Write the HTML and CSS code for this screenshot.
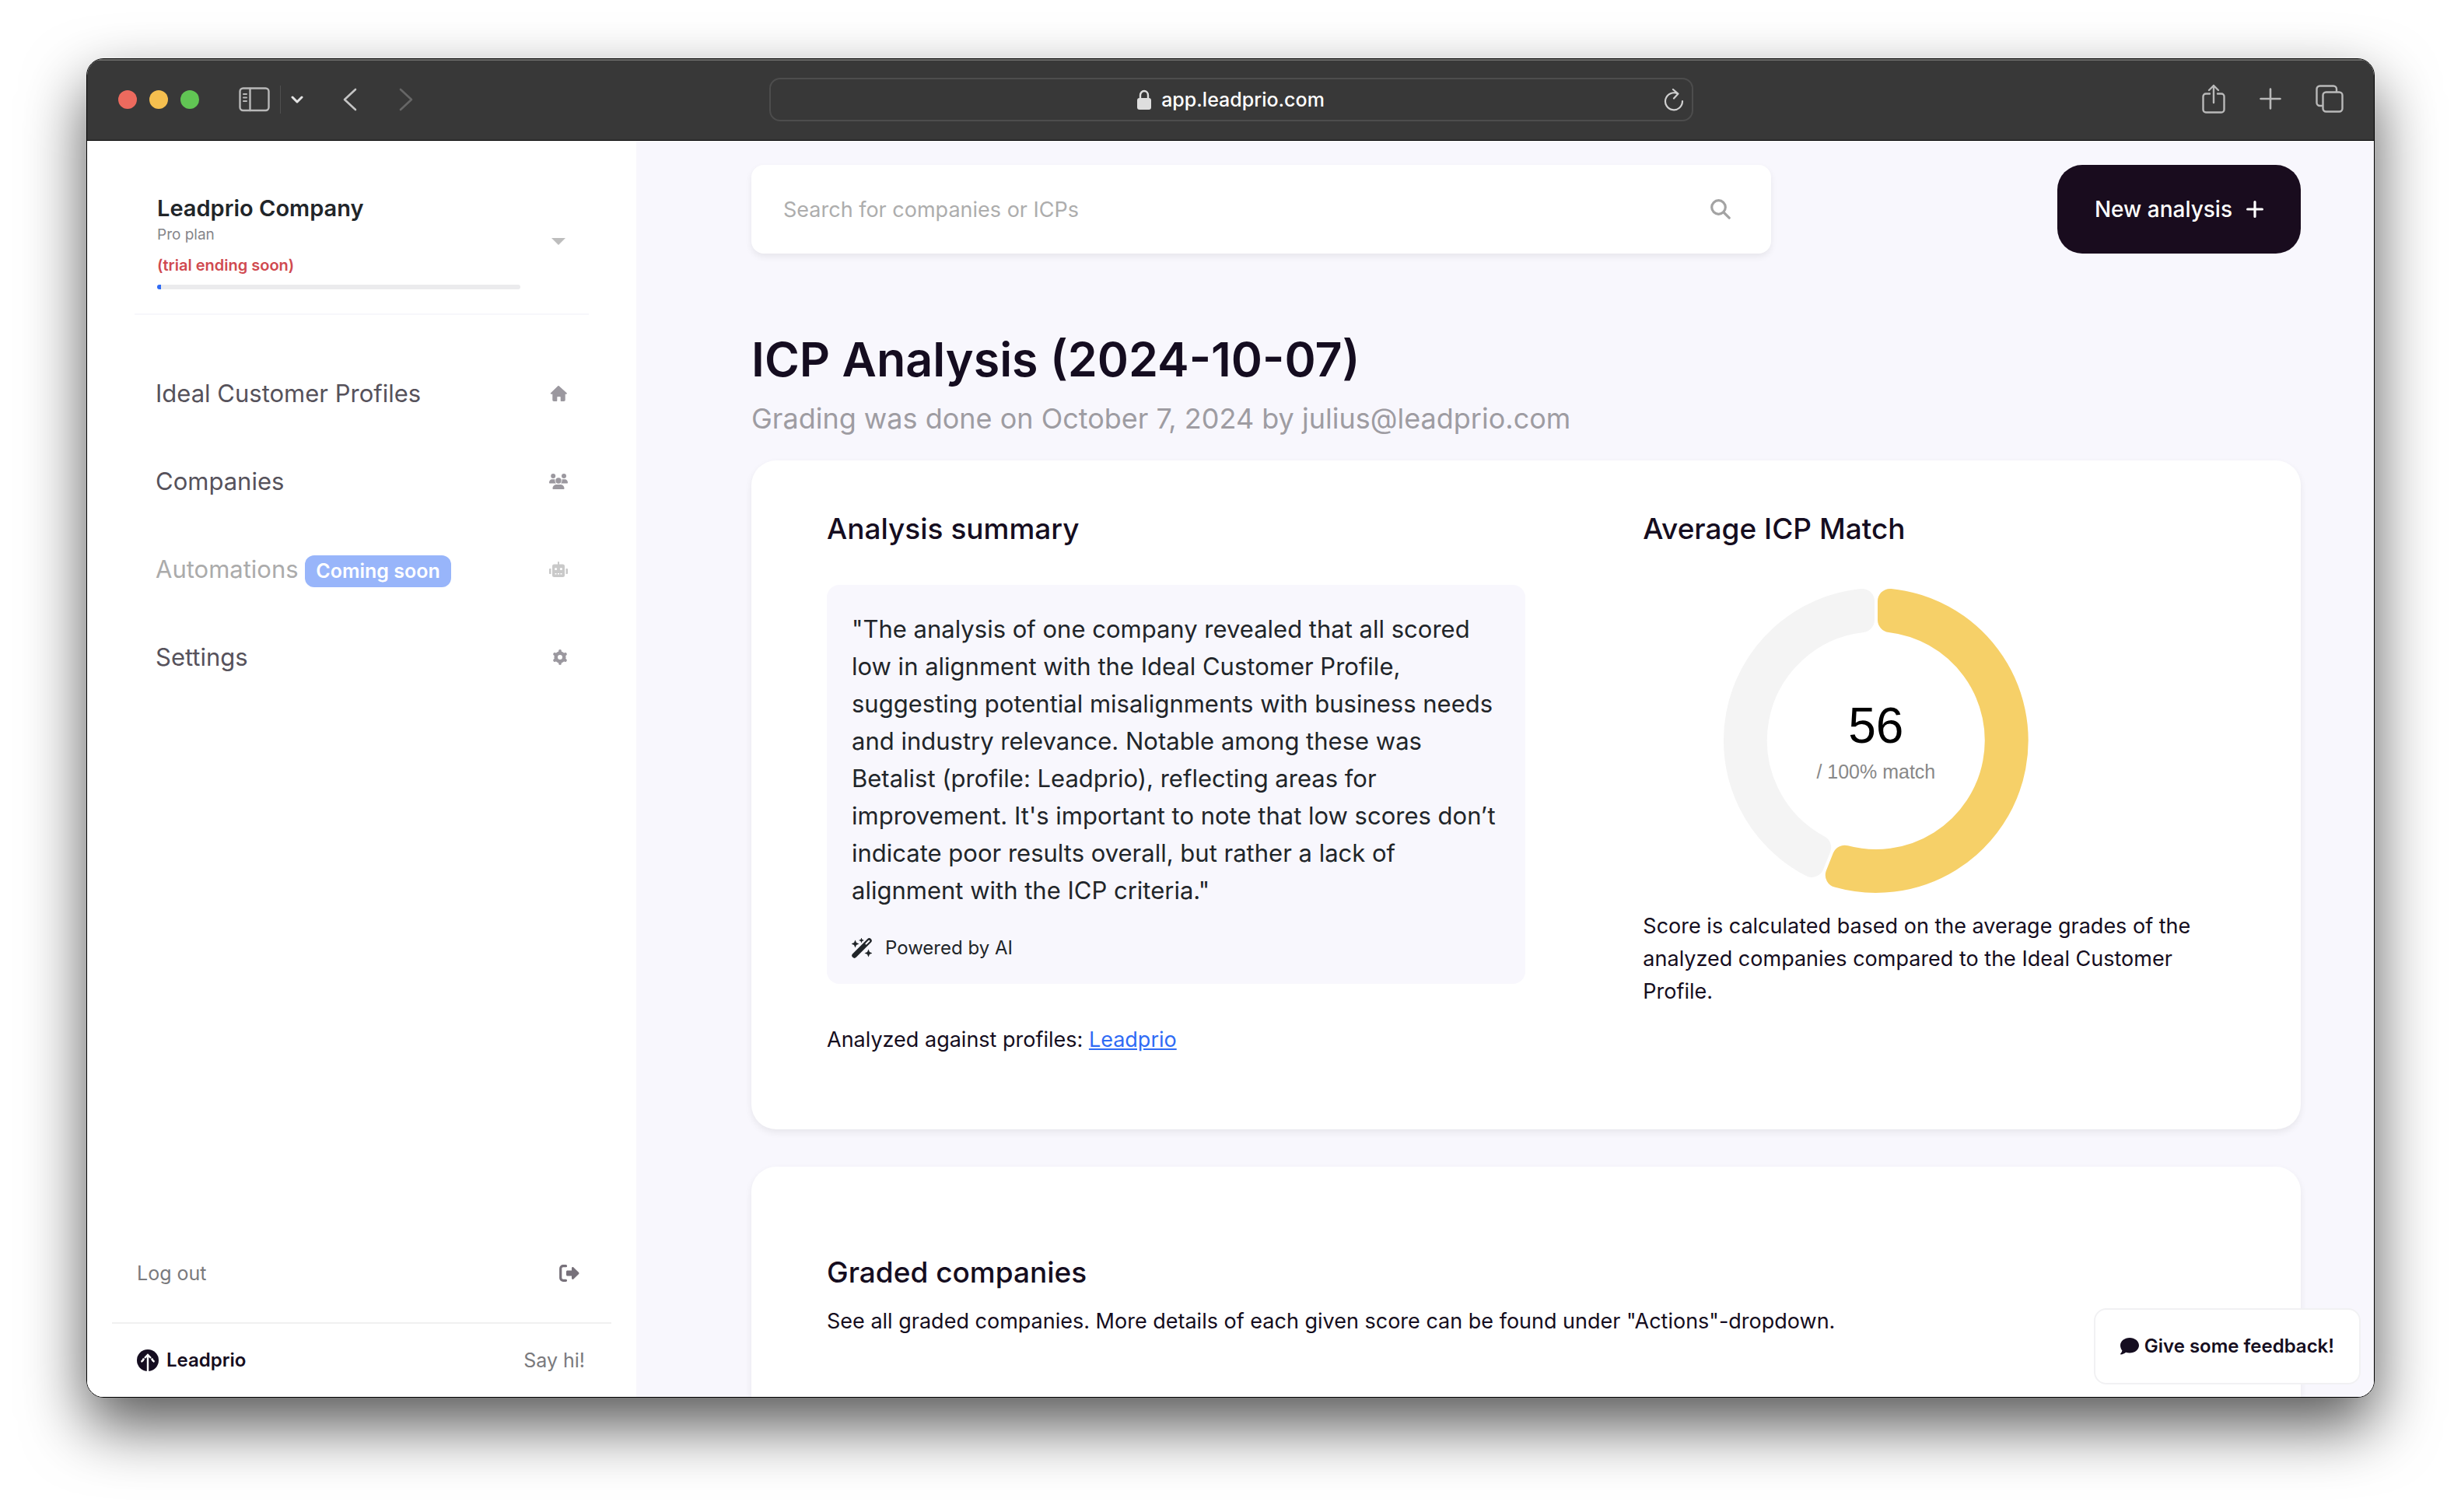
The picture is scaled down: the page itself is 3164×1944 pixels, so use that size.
FILE: index.html
```html
<!DOCTYPE html>
<html lang="en">
<head>
    <meta charset="UTF-8">
    <meta name="viewport" content="width=device-width, initial-scale=1.0">
    <title>Leadprio</title>
    <link rel="stylesheet" href="styles.css">
</head>
<body>
    <div class="window">
        <header class="toolbar">
            <div class="toolbar-side">
                <div class="lights">
                    <span class="light red"></span>
                    <span class="light yellow"></span>
                    <span class="light green"></span>
                </div>
                <div class="sidebar-toggle">
                    <button type="button" aria-label="Toggle sidebar">
                        <svg width="40" height="32" viewBox="0 0 40 32" fill="none" stroke="#b9b9b9" stroke-width="2.4" stroke-linecap="round">
                            <rect x="1.5" y="1.5" width="37" height="28.5" rx="4"/>
                            <path d="M14.500 2v28"/>
                            <path d="M6 9h4M6 13.500h4M6 18h4" stroke-width="2"/>
                        </svg>
                    </button>
                    <span class="toolbar-divider"></span>
                    <button type="button" aria-label="Tab groups">
                        <svg width="16" height="12" viewBox="0 0 16 12" fill="none" stroke="#e4e4e4" stroke-width="3" stroke-linecap="round" stroke-linejoin="round">
                            <path d="M2 3l6 6 6-6"/>
                        </svg>
                    </button>
                </div>
                <div class="history">
                    <button type="button" aria-label="Back">
                        <svg width="18" height="30" viewBox="0 0 18 30" fill="none" stroke="#c4c4c4" stroke-width="2.6" stroke-linecap="round" stroke-linejoin="round">
                            <path d="M16 2L2 15l14 13"/>
                        </svg>
                    </button>
                    <button type="button" aria-label="Forward">
                        <svg width="18" height="30" viewBox="0 0 18 30" fill="none" stroke="#666" stroke-width="2.6" stroke-linecap="round" stroke-linejoin="round">
                            <path d="M2 2l14 13L2 28"/>
                        </svg>
                    </button>
                </div>
            </div>
            <div class="address">
                <span class="address-text">
                    <svg width="18" height="26" viewBox="0 0 18 26">
                        <rect y="11" width="18" height="15" rx="3" fill="#dedede"/>
                        <path d="M4 12V7.500a5 5.500 0 0 1 10 0V12" fill="none" stroke="#dedede" stroke-width="2.4"/>
                    </svg>
                    app.leadprio.com
                </span>
                <button type="button" class="reload" aria-label="Reload">
                    <svg width="26" height="30" viewBox="0 0 26 30" fill="none" stroke="#cfcfcf" stroke-width="2.2" stroke-linecap="round" stroke-linejoin="round">
                        <path d="M18 7.500A11 11 0 1 0 24 17M12 2l6.500 5.500-5.500 6"/>
                    </svg>
                </button>
            </div>
            <div class="toolbar-side toolbar-actions">
                <button type="button" aria-label="Share">
                    <svg width="30" height="38" viewBox="0 0 30 38" fill="none" stroke="#b9b9b9" stroke-width="2.4" stroke-linecap="round" stroke-linejoin="round">
                        <path d="M10 12.500H5a3.500 3.500 0 0 0-3.500 3.500v17A3.500 3.500 0 0 0 5 36.500h20a3.500 3.500 0 0 0 3.500-3.500V16a3.500 3.500 0 0 0-3.500-3.500h-5M15 24V2M9 8l6-6 6 6"/>
                    </svg>
                </button>
                <button type="button" aria-label="New tab">
                    <svg width="28" height="28" viewBox="0 0 28 28" fill="none" stroke="#b9b9b9" stroke-width="2.6" stroke-linecap="round">
                        <path d="M14 1.500v25M1.500 14h25"/>
                    </svg>
                </button>
                <button type="button" aria-label="Tab overview">
                    <svg width="36" height="36" viewBox="0 0 36 36" fill="none" stroke="#b9b9b9" stroke-width="2.4" stroke-linejoin="round">
                        <rect x="9.500" y="9.500" width="25" height="25" rx="4"/>
                        <path d="M9 27H5.500a4 4 0 0 1-4-4V5.500a4 4 0 0 1 4-4H23a4 4 0 0 1 4 4V9"/>
                    </svg>
                </button>
            </div>
        </header>

        <div class="app">
            <aside class="sidebar">
                <div class="org">
                    <div class="org-info">
                        <strong class="org-name">Leadprio Company</strong>
                        <span class="org-plan">Pro plan</span>
                        <span class="org-trial">(trial ending soon)</span>
                        <div class="usage"><div class="usage-bar" style="width: 1%"></div></div>
                    </div>
                    <button type="button" aria-label="Switch company">
                        <svg width="18" height="9" viewBox="0 0 18 9" fill="#bdbdbd"><path d="M0 0h18L9 9z"/></svg>
                    </button>
                </div>

                <nav class="nav">
                    <a href="#">
                        Ideal Customer Profiles
                        <svg width="24" height="20" viewBox="0 0 24 20" fill="#9b989f">
                            <path d="M12.700.3l9.900 8.900c.6.6.3 1.500-.6 1.500h-1.300v7.600c0 .9-.7 1.700-1.700 1.700h-3.300c-.6 0-1-.4-1-1v-4c0-.6-.4-1-1-1h-2.400c-.6 0-1 .4-1 1v4c0 .6-.4 1-1 1H6c-1 0-1.700-.8-1.700-1.700v-7.600H2.600c-.8 0-1.200-.9-.6-1.500L11.300.3c.4-.4 1-.4 1.400 0z"/>
                        </svg>
                    </a>
                    <a href="#">
                        Companies
                        <svg width="24" height="20" viewBox="0 0 24 20" fill="#9b989f">
                            <circle cx="5.200" cy="3" r="3"/>
                            <circle cx="19" cy="3" r="3"/>
                            <circle cx="12" cy="9" r="3.700"/>
                            <path d="M0 11.500c0-2.500 1.700-4.200 3.800-4.200h2.500c.4 0 .8.1 1.200.2-.4 2 .3 3.700 1.500 4.900H.8c-.5 0-.8-.4-.8-.9zM24 11.500c0-2.500-1.700-4.200-3.800-4.200h-2.500c-.4 0-.8.1-1.200.2.4 2-.3 3.700-1.500 4.900h8.200c.5 0 .8-.4.8-.9zM4.500 19c0-2.800 2.100-5 4.800-5h5.400c2.700 0 4.800 2.200 4.800 5 0 .6-.4 1-1 1h-13c-.6 0-1-.4-1-1z"/>
                        </svg>
                    </a>
                    <a href="#" class="disabled">
                        <span>Automations <span class="badge">Coming soon</span></span>
                        <svg width="24" height="20" viewBox="0 0 24 20" fill="#c9c9c9" fill-rule="evenodd">
                            <path d="M12 0c.6 0 1 .4 1 1v2.500h4.500A2.500 2.500 0 0 1 20 6v11.500a2.500 2.500 0 0 1-2.500 2.500h-11A2.500 2.500 0 0 1 4 17.500V6a2.500 2.500 0 0 1 2.500-2.500H11V1c0-.6.400-1 1-1zM7 9.500a1.600 1.600 0 1 0 3.200 0 1.600 1.600 0 1 0-3.200 0zM13.800 9.500a1.600 1.600 0 1 0 3.200 0 1.600 1.600 0 1 0-3.200 0zM7.500 15v1.500h2V15zM11 15v1.500h2V15zM14.500 15v1.500h2V15z"/>
                            <path d="M0 10c0-.6.500-1 1.200-1h1.300v7H1.200C.5 16 0 15.600 0 15zM24 10c0-.6-.5-1-1.200-1h-1.300v7h1.300c.7 0 1.200-.4 1.200-1z"/>
                        </svg>
                    </a>
                    <a href="#">
                        Settings
                        <svg width="20" height="20" viewBox="0 0 20 20" fill="none" stroke="#9b989f" stroke-linecap="round">
                            <circle cx="10" cy="10" r="5.300" stroke-width="4.600"/>
                            <path d="M10 2v2M10 16v2M3.100 6l1.700 1M15.200 13l1.700 1M3.100 14l1.700-1M15.200 7l1.700-1" stroke-width="3.800"/>
                        </svg>
                    </a>
                </nav>

                <a href="#" class="logout">
                    Log out
                    <svg width="26" height="22" viewBox="0 0 26 22" fill="#77717a">
                        <path d="M8.500 1.700H5A3.300 3.300 0 0 0 1.700 5v12A3.300 3.300 0 0 0 5 20.300h3.500" fill="none" stroke="#77717a" stroke-width="3.200" stroke-linecap="round"/>
                        <path d="M16 4.500c0-1.300 1.500-1.900 2.400-1l6.700 6.600c.5.500.5 1.300 0 1.800l-6.700 6.600c-.9.900-2.400.3-2.400-1V14.500h-5.500c-.9 0-1.500-.6-1.500-1.500V9c0-.9.600-1.500 1.500-1.500H16z"/>
                    </svg>
                </a>
                <footer class="brand-row">
                    <a href="#" class="brand">
                        <svg width="28" height="28" viewBox="0 0 28 28">
                            <circle cx="14" cy="14" r="14" fill="#150d20"/>
                            <path d="M14 28V8M5.500 16c2-1 3-3 3.500-4.500M22.500 16c-2-1-3-3-3.500-4.500M10 11l4-4 4 4" fill="none" stroke="#fff" stroke-width="2.400"/>
                        </svg>
                        Leadprio
                    </a>
                    <a href="#">Say hi!</a>
                </footer>
            </aside>

            <main class="main">
                <div class="topbar">
                    <form class="search">
                        <input type="text" placeholder="Search for companies or ICPs" aria-label="Search for companies or ICPs">
                        <button type="submit" aria-label="Search">
                            <svg width="26" height="26" viewBox="0 0 26 26" fill="none" stroke="#a3a3a3" stroke-width="3.200" stroke-linecap="round">
                                <circle cx="10.500" cy="10.500" r="8.800"/>
                                <path d="M17 17l7.200 7.200"/>
                            </svg>
                        </button>
                    </form>
                    <button type="button" class="new-analysis">
                        New analysis
                        <svg width="22" height="22" viewBox="0 0 22 22" fill="none" stroke="#fff" stroke-width="3.200" stroke-linecap="round">
                            <path d="M11 1.600v18.800M1.600 11h18.800"/>
                        </svg>
                    </button>
                </div>

                <h1>ICP Analysis (2024-10-07)</h1>
                <p class="subtitle">Grading was done on October 7, 2024 by julius@leadprio.com</p>

                <section class="card summary">
                    <div>
                        <h2>Analysis summary</h2>
                        <div class="quote">
                            <p>"The analysis of one company revealed that all scored<br>
                            low in alignment with the Ideal Customer Profile,<br>
                            suggesting potential misalignments with business needs<br>
                            and industry relevance. Notable among these was<br>
                            Betalist (profile: Leadprio), reflecting areas for<br>
                            improvement. It's important to note that low scores don’t<br>
                            indicate poor results overall, but rather a lack of<br>
                            alignment with the ICP criteria."</p>
                            <div class="powered">
                                <svg width="26" height="26" viewBox="0 0 26 26" fill="#212529">
                                    <path d="M3.500 22.500L22.500 3.500" stroke="#212529" stroke-width="6.400" stroke-linecap="round"/>
                                    <path d="M18.500 7.500l3.800-3.800" stroke="#f8f7fd" stroke-width="2" stroke-linecap="round"/>
                                    <path d="M4.500 2.500l1.500 3.500L9.500 7.500 6 9 4.500 12.500 3 9-.500 7.500 3 6zM12.500-.500l1 2.500 2.500 1-2.500 1-1 2.500-1-2.500-2.500-1 2.500-1zM21.500 14.500l1.500 3.500 3.500 1.500L23 21l-1.500 3.500L20 21l-3.500-1.500L20 18z"/>
                                </svg>
                                Powered by AI
                            </div>
                        </div>
                        <p class="profiles">Analyzed against profiles: <a href="#">Leadprio</a></p>
                    </div>
                    <div>
                        <h2>Average ICP Match</h2>
                        <div class="donut">
                            <svg width="400" height="400" viewBox="0 0 400 400" stroke-width="32" stroke-linejoin="round">
                                <path d="M218 20.900A180 180 0 1 1 150.800 373.200L159.700 350.700A156 156 0 1 0 218 45z" fill="#f6d068" stroke="#f6d068"/>
                                <path d="M117.300 359.900A180 180 0 0 1 182 20.900V45A156 156 0 0 0 126.200 337.500z" fill="#f4f4f4" stroke="#f4f4f4"/>
                            </svg>
                            <div class="donut-label">
                                <span class="score">56</span>
                                <span class="score-note">/ 100% match</span>
                            </div>
                        </div>
                        <p>Score is calculated based on the average grades of the<br>
                        analyzed companies compared to the Ideal Customer<br>
                        Profile.</p>
                    </div>
                </section>

                <section class="card graded">
                    <h2>Graded companies</h2>
                    <p>See all graded companies. More details of each given score can be found under "Actions"-dropdown.</p>
                </section>

                <button type="button" class="feedback">
                    <svg width="24" height="22" viewBox="0 0 24 22" fill="#150d20">
                        <path d="M12 0c6.600 0 12 4.300 12 9.800s-5.400 9.800-12 9.800c-1.700 0-3.400-.3-4.900-.8C5.500 20 3 21.500.7 21.500c-.6 0-.9-.7-.5-1.100 1-1.100 1.900-2.500 2.200-4C.9 14.600 0 12.300 0 9.800 0 4.300 5.400 0 12 0z"/>
                    </svg>
                    Give some feedback!
                </button>
            </main>
        </div>
    </div>
</body>
</html>
```

FILE: styles.css
```css
* {
    box-sizing: border-box;
}

body {
    margin: 0;
    padding: 75px 111px 147px;
    height: 100vh;
    background: #fff;
    color: #150d20;
    font-family: Inter, "Liberation Sans", sans-serif;
    font-size: 27px;
    line-height: 42px;
}

h1, h2, p {
    margin: 0;
}

a {
    color: inherit;
    text-decoration: none;
}

button {
    padding: 0;
    border: none;
    background: none;
    font: inherit;
    color: inherit;
    cursor: pointer;
}

svg {
    display: block;
    flex-shrink: 0;
}

/* Browser window */
.window {
    display: flex;
    flex-direction: column;
    height: 100%;
    border: 1px solid #000;
    border-radius: 22px;
    overflow: hidden;
    box-shadow: 0 36px 80px rgba(0, 0, 0, 0.66);
}

.toolbar {
    display: flex;
    align-items: center;
    height: 105px;
    padding: 0 39px 0 40px;
    background: #383838;
    border-bottom: 1px solid #000;
    box-shadow: inset 0 2px 0 #6b6b69;
}

.toolbar-side {
    display: flex;
    flex: 1;
    align-items: center;
}

.lights {
    display: flex;
    gap: 16px;
}

.light {
    width: 24px;
    height: 24px;
    border-radius: 50%;
}

.red {
    background: #ed6a5e;
}

.yellow {
    background: #f5bf4f;
}

.green {
    background: #61c554;
}

.sidebar-toggle {
    display: flex;
    align-items: center;
    gap: 13px;
    margin-left: 51px;
}

.toolbar-divider {
    width: 1px;
    height: 36px;
    background: #505050;
}

.history {
    display: flex;
    gap: 54px;
    margin-left: 51px;
}

.address {
    display: flex;
    align-items: center;
    width: 1188px;
    height: 56px;
    padding: 0 10px 0 36px;
    border: 2px solid #4d4d4d;
    border-radius: 14px;
}

.address-text {
    display: flex;
    flex: 1;
    align-items: center;
    justify-content: center;
    gap: 13px;
    color: #fff;
    font-size: 25px;
    font-weight: 500;
}

.toolbar-actions {
    justify-content: flex-end;
    gap: 44px;
    padding-bottom: 2px;
}

.app {
    display: flex;
    flex: 1;
    min-height: 0;
}

/* Sidebar */
.sidebar {
    display: flex;
    flex-direction: column;
    flex: 0 0 706px;
    padding: 67px 32px 26px;
    background: #fff;
}

.org {
    display: flex;
    align-items: center;
    justify-content: space-between;
    margin: 0 29px;
    padding: 0 30px 31px 29px;
    border-bottom: 2px solid #f7f7fb;
}

.org-info {
    display: flex;
    flex-direction: column;
    width: 467px;
}

.org-name {
    color: #212529;
    font-size: 29px;
    font-weight: 600;
    line-height: 40px;
}

.org-plan {
    color: #85858a;
    font-size: 19px;
    line-height: 28px;
}

.org-trial {
    margin: 11px 0;
    color: #d04a50;
    font-size: 20px;
    font-weight: 600;
    line-height: 28px;
}

.usage {
    height: 6px;
    border-radius: 3px;
    background: #ebebed;
    overflow: hidden;
}

.usage-bar {
    height: 100%;
    background: #2f6bf5;
}

.nav {
    display: flex;
    flex-direction: column;
    gap: 65px;
    padding: 77px 56px 0;
}

.nav a {
    display: flex;
    align-items: center;
    justify-content: space-between;
    color: #56525b;
    font-size: 31px;
    line-height: 48px;
}

.nav .disabled {
    color: #ababab;
}

.badge {
    display: inline-block;
    padding: 0 14px;
    border-radius: 12px;
    background: #98b5fa;
    color: #fff;
    font-size: 25px;
    font-weight: 600;
    line-height: 41px;
}

.logout {
    display: flex;
    align-items: center;
    justify-content: space-between;
    margin-top: auto;
    padding: 0 41px 42px 32px;
    border-bottom: 2px solid #f1f1f1;
    color: #7a7a7d;
    font-size: 25px;
}

.brand-row {
    display: flex;
    align-items: center;
    justify-content: space-between;
    padding: 26px 34px 0 32px;
    color: #7a7a7d;
    font-size: 25px;
}

.brand {
    display: flex;
    align-items: center;
    gap: 10px;
    color: #150d20;
    font-size: 24px;
    font-weight: 600;
}

/* Page content */
.main {
    position: relative;
    display: flex;
    flex: 1;
    flex-direction: column;
    padding: 31px 94px 0 148px;
    background: #f8f7fd;
}

.topbar {
    display: flex;
    justify-content: space-between;
    height: 114px;
    margin-bottom: 98px;
}

.search {
    display: flex;
    align-items: center;
    width: 65.8%;
    padding: 0 52px 0 41px;
    border-radius: 16px;
    background: #fff;
    box-shadow: 0 4px 8px rgba(0, 0, 0, 0.07);
}

.search input {
    flex: 1;
    padding: 2px 0 0;
    border: none;
    outline: none;
    background: none;
    font: inherit;
}

.search input::placeholder {
    color: #adadad;
}

.new-analysis {
    display: flex;
    align-items: center;
    gap: 18px;
    padding: 0 48px;
    border-radius: 32px;
    background: #190c1e;
    color: #fff;
    font-size: 28px;
    font-weight: 500;
}

h1 {
    font-size: 61px;
    font-weight: 600;
    line-height: 76px;
}

.subtitle {
    margin: 10px 0 26px;
    color: #9e9ca2;
    font-size: 36px;
    line-height: 56px;
}

.card {
    border-radius: 32px;
    background: #fff;
    box-shadow: 0 4px 10px rgba(0, 0, 0, 0.07);
}

h2 {
    font-size: 37px;
    font-weight: 500;
    line-height: 56px;
}

.summary {
    display: grid;
    grid-template-columns: 6fr 5fr;
    gap: 151px;
    padding: 60px 97px 94px;
}

.quote {
    margin: 44px 0 51px;
    padding: 33px 32px 28px;
    border-radius: 16px;
    background: #f8f7fd;
    color: #212529;
    font-size: 31px;
    line-height: 48px;
    white-space: nowrap;
}

.powered {
    display: flex;
    align-items: center;
    gap: 17px;
    margin-top: 32px;
    font-size: 24px;
    line-height: 36px;
}

.profiles a {
    color: #2f6bf5;
    text-decoration: underline;
}

.donut {
    position: relative;
    width: 80%;
    margin: 44px 0 18px;
}

.donut svg {
    margin: 0 auto;
}

/* Score in the middle of the ring */
.donut-label {
    position: absolute;
    inset: 0;
    display: flex;
    flex-direction: column;
    align-items: center;
    justify-content: center;
    font-family: "Liberation Sans", Arial, sans-serif;
}

.score {
    color: #000;
    font-size: 64px;
    line-height: 80px;
}

.score-note {
    color: #888;
    font-size: 25px;
    line-height: 38px;
}

.graded {
    flex: 1;
    margin-top: 48px;
    padding: 108px 97px 0;
    border-radius: 32px 32px 0 0;
}

.graded p {
    margin-top: 14px;
}

/* Floats over the page corner */
.feedback {
    position: absolute;
    right: 17px;
    bottom: 16px;
    display: flex;
    align-items: center;
    gap: 7px;
    height: 98px;
    padding: 0 32px;
    border: 2px solid #f1f1f3;
    border-radius: 16px;
    background: #fff;
    font-size: 24px;
    font-weight: 600;
}
```
